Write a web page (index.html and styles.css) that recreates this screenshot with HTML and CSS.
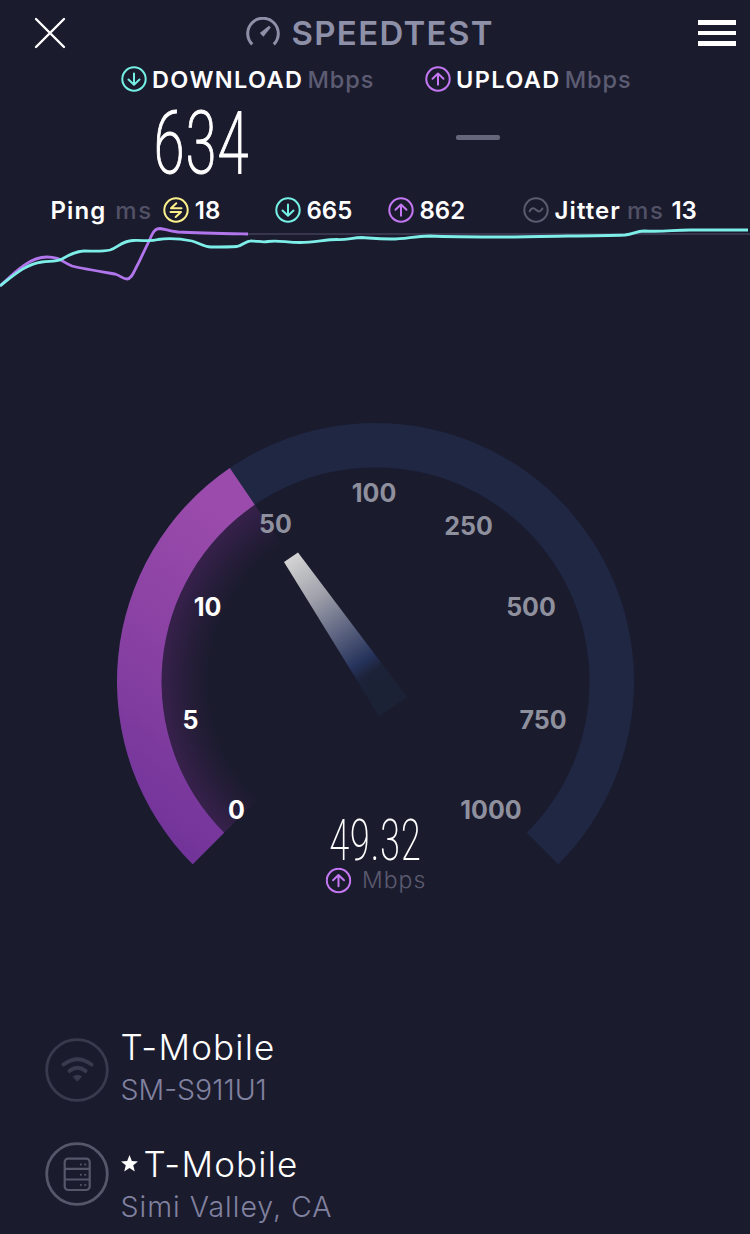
FILE: index.html
```html
<!DOCTYPE html>
<html lang="en">
  <head>
    <meta charset="UTF-8" />
    <meta name="viewport" content="width=device-width, initial-scale=1.0" />
    <title>Speedtest</title>
    <link rel="stylesheet" href="styles.css">
  </head>
  <body>
    <!-- Shared icons -->
    <svg class="defs">
      <symbol id="down" viewBox="0 0 26 26">
        <circle cx="13" cy="13" r="11.7" />
        <path d="M13 7.5v11M7.5 13.5l5.5 5.2 5.5-5.2" />
      </symbol>
      <symbol id="up" viewBox="0 0 26 26">
        <circle cx="13" cy="13" r="11.7" />
        <path d="M13 18.8v-11M7.5 12.7l5.5-5.2 5.5 5.2" />
      </symbol>
      <symbol id="ping" viewBox="0 0 26 26">
        <circle cx="13" cy="13" r="11.7" />
        <path d="M13.300 6.200l-5.300 5h10.500M7.500 15h10.500l-5.300 5" />
      </symbol>
      <symbol id="jitter" viewBox="0 0 26 26">
        <circle cx="13" cy="13" r="11.7" />
        <path d="M6.600 14.300c2-4 4.200-3.600 6.400-1.500s4.400 2.600 6.400-1.300" />
      </symbol>
    </svg>

    <header class="header">
      <svg class="close" viewBox="0 0 32 32"><path d="M2 2l28 28M30 2L2 30" /></svg>
      <div class="brand">
        <svg class="brand-icon" viewBox="0 0 34 30">
          <path class="brand-arc" d="M6.200 27.400A15.300 15.300 0 1 1 27.800 27.400" />
          <path class="brand-needle" d="M23 8.800L24.800 10.600 17.400 19.700 13.800 16.100z" />
        </svg>
        <span class="brand-name">SPEEDTEST</span>
      </div>
      <div class="menu"><i></i><i></i><i></i></div>
    </header>

    <section class="metrics">
      <div class="metric">
        <svg class="icon cyan"><use href="#down" /></svg>
        <span class="metric-name">DOWNLOAD</span>
        <span class="metric-unit">Mbps</span>
      </div>
      <div class="metric">
        <svg class="icon purple"><use href="#up" /></svg>
        <span class="metric-name">UPLOAD</span>
        <span class="metric-unit">Mbps</span>
      </div>
    </section>

    <section class="values">
      <svg class="big-value" viewBox="0 0 100 100">
        <text x="2" y="79" textLength="96" lengthAdjust="spacingAndGlyphs">634</text>
      </svg>
      <div class="pending"></div>
    </section>

    <section class="stats">
      <div class="stat">
        <b class="word">Ping</b><span class="stat-unit ping-unit">ms</span>
        <svg class="icon yellow"><use href="#ping" /></svg>
        <b>18</b>
      </div>
      <div class="stat">
        <svg class="icon cyan"><use href="#down" /></svg>
        <b>665</b>
      </div>
      <div class="stat">
        <svg class="icon purple"><use href="#up" /></svg>
        <b>862</b>
      </div>
      <div class="stat">
        <svg class="icon grey"><use href="#jitter" /></svg>
        <b class="word">Jitter</b><span class="stat-unit">ms</span><b>13</b>
      </div>
    </section>

    <!-- Throughput history -->
    <svg class="chart" viewBox="0 226 750 70">
      <path class="chart-base" d="M248 234H750" />
      <path class="chart-up" d="M0 286C16 271 30 257 47 257C60 257 62 262 72 266C84 269 103 272 115 274C121 276 123 279 127 279C132 279 134 271 138 264L150 239C153 232 155 228.500 160 228.500C165 229 168 231 178 232C200 233 225 233.500 248 234" />
      <path class="chart-down" d="M0 286C14 275 26 264 42 262C50 261 56 262 62 259C69 255 76 251 84 251C93 251 101 252 110 250C118 248 121 241 133 240.500C144 240 150 242 158 239.500C170 237.500 182 239 192 241C200 243 203 247 211 247C220 247 229 247 237 246.500C243 245 246 240.500 252 241C258 241 262 242.500 268 241.500C278 240 286 242.500 300 242.500C315 242.500 325 239.500 337 239.500C348 240 352 237.500 362 237.500C370 238 377 239 391 239C407 239 413 236 430 236C450 237 485 237 510 237C545 236 590 236 625 235C634 234 636 231 644 231C665 232 672 230 690 230H748" />
    </svg>

    <!-- Speed gauge -->
    <svg class="gauge" viewBox="0 296 750 731">
      <defs>
        <linearGradient id="fill" x1="0" y1="1" x2="0.25" y2="0">
          <stop offset="0" stop-color="#6b2f97" />
          <stop offset="0.5" stop-color="#853fa1" />
          <stop offset="1" stop-color="#9a4bab" />
        </linearGradient>
        <radialGradient id="glow" gradientUnits="userSpaceOnUse" cx="375.500" cy="681.500" r="214">
          <stop offset="0.78" stop-color="#6a2b80" stop-opacity="0" />
          <stop offset="0.88" stop-color="#6a2b80" stop-opacity="0.15" />
          <stop offset="1" stop-color="#6a2b80" stop-opacity="0.36" />
        </radialGradient>
        <linearGradient id="needle" gradientUnits="userSpaceOnUse" x1="291" y1="557" x2="393" y2="707">
          <stop offset="0" stop-color="#d4d4d4" />
          <stop offset="0.25" stop-color="#a2a3ac" />
          <stop offset="0.5" stop-color="#5c6380" />
          <stop offset="0.7" stop-color="#25325a" />
          <stop offset="0.78" stop-color="#1c2237" />
          <stop offset="1" stop-color="#1c2235" />
        </linearGradient>
      </defs>
      <path class="track" d="M192.700 864.300A258.500 258.500 0 1 1 558.300 864.300L526.800 832.800A214 214 0 1 0 224.200 832.800z" />
      <path fill="url(#glow)" d="M375.500 681.500L224.200 832.800A214 214 0 0 1 254.800 504.800z" />
      <path fill="url(#fill)" d="M192.700 864.300A258.500 258.500 0 0 1 229.800 468L254.800 504.800A214 214 0 0 0 224.200 832.800z" />
      <path fill="url(#needle)" d="M284 562L298 552.500 407 697 379 716z" />
      <g class="ticks">
        <text class="reached" x="236.500" y="818.500">0</text>
        <text class="reached" x="190.500" y="728.500">5</text>
        <text class="reached" x="207.500" y="615.500">10</text>
        <text x="275.500" y="533">50</text>
        <text x="374" y="502">100</text>
        <text x="468.500" y="534.500">250</text>
        <text x="531" y="615.500">500</text>
        <text x="543" y="728.500">750</text>
        <text x="491" y="818.500">1000</text>
      </g>
      <text class="current" x="329" y="860" textLength="92" lengthAdjust="spacingAndGlyphs">49.32</text>
      <use class="purple" href="#up" x="325.500" y="867.500" width="26" height="26" />
      <text class="current-unit" x="362" y="888">Mbps</text>
    </svg>

    <section class="servers">
      <div class="server">
        <svg class="server-icon wifi" viewBox="0 0 64 64">
          <circle cx="32" cy="32" r="30.300" />
          <path d="M18.500 26.500Q32.500 16 46.500 26.500M24.500 32.800Q32.500 26.800 40.500 32.800" />
          <path class="solid" d="M28.500 38.500Q32.500 36 36.500 38.500L32.500 43z" />
        </svg>
        <div>
          <div class="server-name">T-Mobile</div>
          <div class="server-info">SM-S911U1</div>
        </div>
      </div>
      <div class="server">
        <svg class="server-icon host" viewBox="0 0 64 64">
          <circle cx="32" cy="32" r="30.300" />
          <rect x="19.700" y="16.600" width="25" height="31.400" rx="3.500" />
          <path d="M19.700 26.900h25M19.700 37.500h25" />
          <path class="dots" d="M35.800 22.500h.1M40.200 22.500h.1M35.800 32.800h.1M40.200 32.800h.1M35.800 43h.1M40.200 43h.1" />
        </svg>
        <div>
          <div class="server-name">
            <svg class="star" viewBox="1 1 16 16"><path d="M9 1l2.200 5.600 5.800.400-4.500 3.700 1.500 5.800L9 13.300l-5 3.200 1.500-5.800L1 7l5.800-.400z" /></svg>
            <span>T-Mobile</span>
          </div>
          <div class="server-info place">Simi Valley, CA</div>
        </div>
      </div>
    </section>
  </body>
</html>
```

FILE: styles.css
```css
* {
  box-sizing: border-box;
}

body {
  width: 750px;
  height: 1234px;
  margin: 0;
  overflow: hidden;
  background: #1b1b2e;
  color: #fff;
  font-family: Inter, "Liberation Sans", sans-serif;
}

svg {
  display: block;
  flex: none;
}

.defs {
  width: 0;
  height: 0;
}

/* Header */
.header {
  display: grid;
  grid-template-columns: 211.5px 1fr auto;
  align-items: center;
  height: 66px;
  padding: 0 14px 0 34px;
}

.close {
  width: 32px;
  height: 32px;
  fill: none;
  stroke: #fff;
  stroke-width: 2.4;
  stroke-linecap: round;
}

.brand {
  display: flex;
  align-items: center;
  gap: 12px;
}

.brand-icon {
  width: 34px;
  height: 30px;
  margin-bottom: 3px;
}

.brand-arc {
  fill: none;
  stroke: #8e90a8;
  stroke-width: 3;
}

.brand-needle {
  fill: #8e90a8;
}

.brand-name {
  color: #8e90a8;
  font-size: 33px;
  font-weight: 600;
  letter-spacing: 1.3px;
}

.menu {
  display: flex;
  flex-direction: column;
  gap: 6px;
}

.menu i {
  width: 38px;
  height: 4.5px;
  background: #fff;
}

/* Icons */
.icon {
  width: 26px;
  height: 26px;
}

.icon,
.purple {
  fill: none;
  stroke-width: 2;
  stroke-linecap: round;
  stroke-linejoin: round;
}

.cyan {
  stroke: #74f0e4;
}

.purple {
  stroke: #c477f3;
}

.yellow {
  stroke: #fbf08a;
}

.grey {
  stroke: #5b5b70;
}

/* Download and upload */
.metrics {
  display: grid;
  grid-template-columns: 304px 1fr;
  height: 28px;
  padding-left: 120.5px;
}

.metric {
  display: flex;
  align-items: center;
  font-size: 23.5px;
  line-height: 28px;
}

.metric .icon {
  margin-bottom: 2px;
}

.metric-name {
  margin-left: 5.5px;
  font-weight: 600;
  letter-spacing: 1.4px;
}

.metric-unit {
  margin-left: 4px;
  color: #5c5c72;
  font-weight: 500;
  letter-spacing: 0.9px;
}

.values {
  display: flex;
  height: 100px;
  padding-left: 151px;
}

.big-value {
  width: 100px;
  height: 100px;
  fill: #fff;
  stroke: #fff;
  stroke-width: 1px;
  font-family: Roboto, Inter, sans-serif;
  font-size: 87px;
  font-stretch: 75%;
  font-weight: 200;
}

.pending {
  width: 44px;
  height: 5px;
  margin: 41px 0 0 205px;
  border-radius: 2px;
  background: #66667a;
}

/* Ping, speeds and jitter */
.stats {
  display: grid;
  grid-template-columns: 224px 113px 135px 1fr;
  height: 32px;
  padding-left: 50.5px;
}

.stat {
  display: flex;
  align-items: center;
  gap: 6px;
  font-size: 24px;
}

.stat b {
  font-weight: 600;
}

.stat .word {
  letter-spacing: 1.1px;
}

.stat-unit {
  margin-right: 1px;
  color: #515166;
  font-weight: 500;
  letter-spacing: 1.6px;
}

.ping-unit {
  margin: 0 4px 0 3px;
}

/* Chart */
.chart {
  width: 750px;
  height: 70px;
  fill: none;
  stroke-width: 2.8;
}

.chart-base {
  stroke: #42405a;
  stroke-width: 1.5;
}

.chart-up {
  stroke: #b276ec;
}

.chart-down {
  stroke: #7eeee8;
}

/* Gauge */
.gauge {
  width: 750px;
  height: 731px;
}

.track {
  fill: #1f2743;
}

.ticks {
  fill: #8f909d;
  font-size: 25px;
  font-weight: 700;
  text-anchor: middle;
}

.reached {
  fill: #fff;
}

.current {
  fill: #fff;
  font-family: Roboto, Inter, sans-serif;
  font-size: 57px;
  font-stretch: 75%;
  font-weight: 200;
}

.current-unit {
  fill: #5b5b70;
  font-size: 23px;
  font-weight: 300;
  letter-spacing: 1px;
}

/* Provider and server */
.servers {
  display: flex;
  flex-direction: column;
  gap: 34px;
  padding-left: 45px;
}

.server {
  display: flex;
  gap: 11.5px;
}

.server-icon {
  width: 64px;
  height: 64px;
  fill: none;
  stroke-width: 2.8;
}

.wifi {
  margin-top: 10.5px;
  stroke: #3a3a4f;
}

.wifi path {
  stroke-width: 4;
  stroke-linecap: round;
}

.wifi .solid {
  fill: #3a3a4f;
  stroke-width: 1;
}

.host {
  margin-top: -2.5px;
  stroke: #57576b;
}

.host rect,
.host path {
  stroke-width: 2.2;
}

.host .dots {
  stroke-width: 2;
  stroke-linecap: round;
}

.server-name {
  display: flex;
  align-items: center;
  gap: 6px;
  height: 41px;
  padding-bottom: 2px;
  font-size: 35px;
  font-weight: 300;
  letter-spacing: 1.2px;
}

.star {
  width: 17px;
  height: 17px;
  fill: #fff;
}

.server-info {
  height: 42px;
  color: #8182a0;
  font-size: 28.5px;
  font-weight: 300;
  line-height: 44px;
}

.place {
  letter-spacing: 1px;
}
```
